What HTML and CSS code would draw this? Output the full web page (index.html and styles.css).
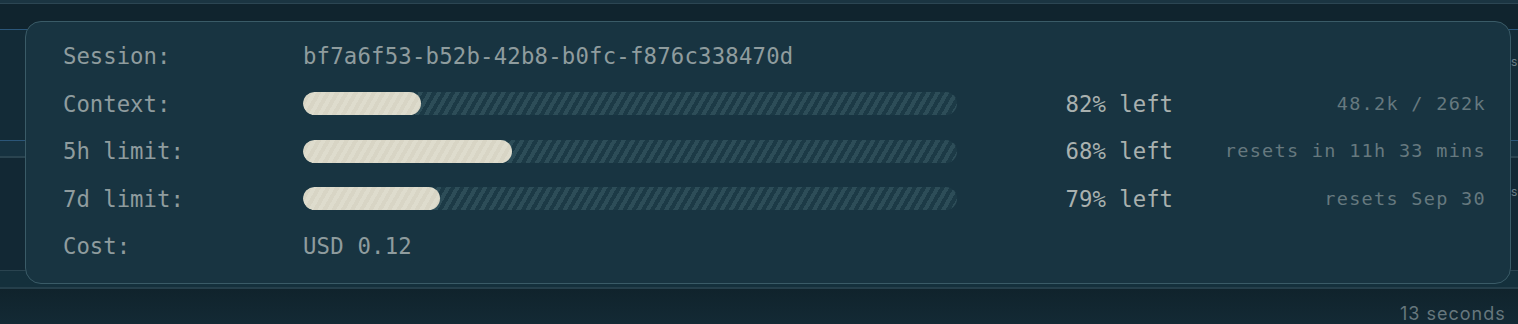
FILE: index.html
```html
<!DOCTYPE html>
<html>
<head>
<meta charset="utf-8">
<link rel="stylesheet" href="styles.css">
</head>
<body>
<div class="scene">
  <div class="topstrip"></div>
  <div class="gap"></div>
  <div class="row row-a"><span class="edge-text">s</span></div>
  <div class="band band-a"></div>
  <div class="row row-b"><span class="edge-text">s</span></div>
  <div class="band band-b"></div>
  <div class="foot"><span class="foot-text">13 seconds</span></div>

  <div class="popover">
    <div class="grid">
      <div class="label">Session:</div>
      <div class="value span3">bf7a6f53-b52b-42b8-b0fc-f876c338470d</div>

      <div class="label">Context:</div>
      <div class="bar"><div class="fill" style="width:18%"></div></div>
      <div class="pct">82% left</div>
      <div class="note">48.2k / 262k</div>

      <div class="label">5h limit:</div>
      <div class="bar"><div class="fill" style="width:32%"></div></div>
      <div class="pct">68% left</div>
      <div class="note">resets in 11h 33 mins</div>

      <div class="label">7d limit:</div>
      <div class="bar"><div class="fill" style="width:21%"></div></div>
      <div class="pct">79% left</div>
      <div class="note">resets Sep 30</div>

      <div class="label">Cost:</div>
      <div class="value span3">USD 0.12</div>
    </div>
  </div>
</div>
</body>
</html>
```
FILE: styles.css
```css
html, body {
  margin: 0;
  padding: 0;
  background: #11252f;
  overflow: hidden;
}
.scene {
  position: relative;
  width: 1518px;
  height: 324px;
  background: linear-gradient(180deg, #11252f 0%, #132a35 60%, #12252e 100%);
  font-family: "Inter", "Liberation Sans", sans-serif;
}
.topstrip {
  height: 3px;
  background: #1b3542;
  border-bottom: 1px solid #2c4653;
}
.gap {
  height: 25px;
  background: #10242e;
}
.row {
  box-sizing: border-box;
  border-top: 1px solid #2b5679;
  background: #132b37;
  padding-left: 1511px;
  white-space: nowrap;
  color: #6c7f86;
  font-size: 12px;
}
.row-a { height: 111px; padding-top: 24px; }
.row-b { height: 113px; padding-top: 26px; border-top-color: #2a4450; background: #122834; }
.band-a {
  box-sizing: border-box;
  height: 17px;
  border-top: 1px solid #2b5679;
  border-bottom: 1px solid #2a4450;
  background: #163240;
}
.band-b {
  box-sizing: border-box;
  height: 19px;
  border-top: 1px solid #2a4450;
  border-bottom: 2px solid #253f4b;
  background: #14303c;
}
.foot {
  height: 36px;
  padding-left: 1400px;
  white-space: nowrap;
  background: linear-gradient(180deg, #10232c, #132a35);
}
.foot-text {
  display: inline-block;
  margin-top: 15px;
  color: #66777d;
  font-size: 18px;
  line-height: 20px;
  letter-spacing: 1px;
}
.popover {
  position: absolute;
  left: 25px;
  top: 21px;
  width: 1486px;
  height: 263px;
  box-sizing: border-box;
  border: 1.5px solid #3a5b67;
  border-radius: 16px;
  background: #183441;
  padding: 22px 24px 0 37px;
  font-family: "DejaVu Sans Mono", "Liberation Mono", monospace;
  font-size: 22.3px;
}
.grid {
  display: grid;
  grid-template-columns: 240px 654px 216px 1fr;
  grid-auto-rows: 24px;
  row-gap: 23.5px;
  align-items: center;
  line-height: 24px;
}
.label { color: #8f9c9e; white-space: nowrap; }
.value { color: #8f9c9e; white-space: nowrap; letter-spacing: 0.2px; }
.span3 { grid-column: 2 / 5; }
.bar {
  height: 23px;
  border-radius: 12px;
  overflow: hidden;
  background: repeating-linear-gradient(120deg, #1c3a46 0 4px, #2d4d58 4px 8px);
}
.fill {
  height: 100%;
  border-radius: 12px;
  background: repeating-linear-gradient(120deg, #dedccd 0 4px, #d8d5c5 4px 8px);
}
.pct {
  text-align: right;
  color: #a9b1af;
  white-space: nowrap;
}
.note {
  text-align: right;
  color: #66797f;
  font-size: 18.5px;
  letter-spacing: 1.3px;
  white-space: nowrap;
}
```
